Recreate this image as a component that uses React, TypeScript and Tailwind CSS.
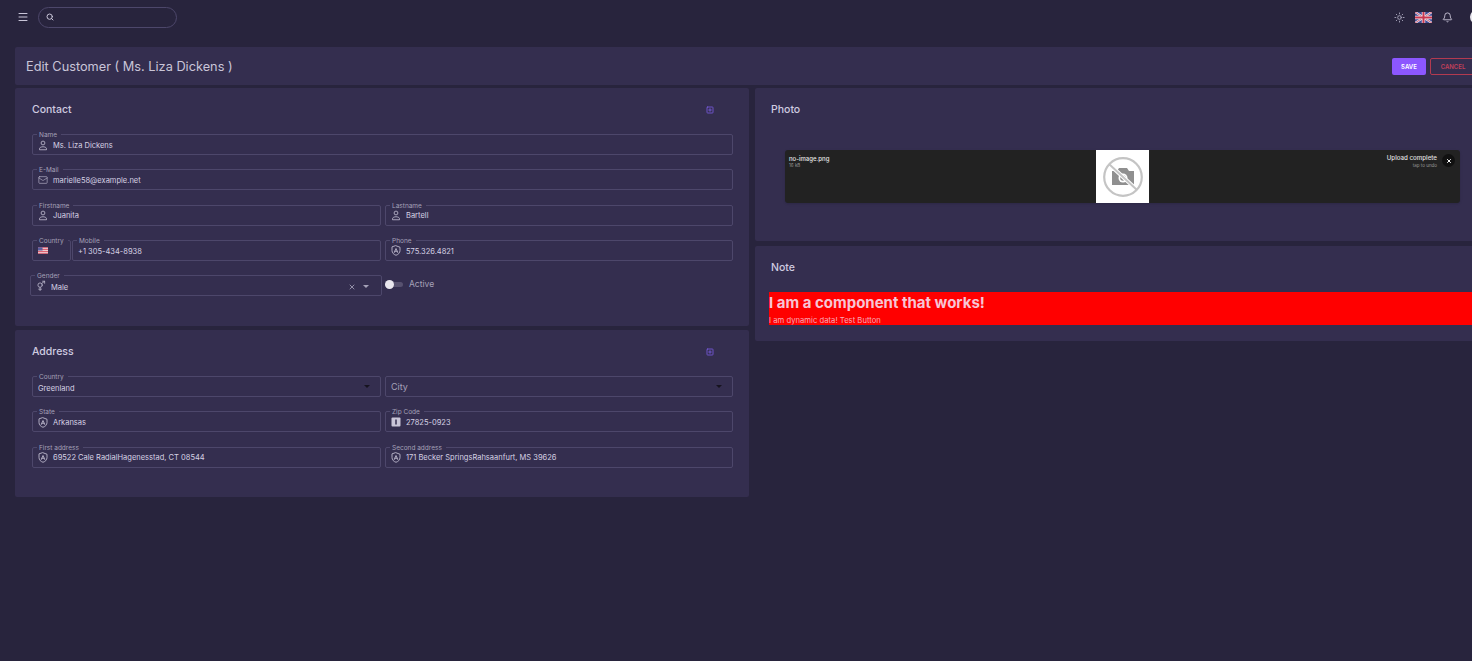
import React from 'react';
import { Menu, Search, Sun, Bell, Mail, X, SquarePlus } from 'lucide-react';

const font = { fontFamily: 'Inter, "Noto Sans", sans-serif' };

const Person = () => (
  <svg width="10" height="11" viewBox="0 0 20 22" fill="none" stroke="currentColor" strokeWidth="1.700" strokeLinejoin="round">
    <circle cx="10" cy="6" r="3.800" />
    <path d="M3 19.500v-2c0-2.800 4.300-4 7-4s7 1.200 7 4v2Z" />
  </svg>
);

const ShieldA = () => (
  <svg width="10" height="11" viewBox="0 0 20 22" fill="none" stroke="currentColor" strokeWidth="1.800" strokeLinejoin="round" strokeLinecap="round">
    <path d="M10 1.5 18 4.5V11c0 5-3.6 8.2-8 9.5C5.600 19.200 2 16 2 11V4.500Z" />
    <path d="M6.500 15 10 7l3.500 8M7.800 12.500h4.400" />
  </svg>
);

const Badge = () => (
  <svg width="10" height="10" viewBox="0 0 20 20">
    <rect x="1" y="1" width="18" height="18" rx="2" fill="#c9c5d8" />
    <rect x="8.500" y="5" width="3" height="10" fill="#342e4f" />
  </svg>
);

const Gender = () => (
  <svg width="11" height="12" viewBox="0 0 22 24" fill="none" stroke="currentColor" strokeWidth="1.800" strokeLinecap="round">
    <circle cx="9" cy="10" r="4.800" />
    <path d="M12.500 6.500 19 1.500M14.500 1.500H19V6M9 15v7M6 19h6" />
  </svg>
);

const UsFlag = () => (
  <svg width="11" height="7" viewBox="0 0 22 14">
    <rect width="22" height="14" fill="#f1e4e8" />
    <path d="M0 1h22M0 5h22M0 9h22M0 13h22" stroke="#d8475a" strokeWidth="2" />
    <rect width="10" height="7" fill="#5b5f9e" />
  </svg>
);

const UkFlag = () => (
  <svg width="17" height="11" viewBox="0 0 34 22">
    <rect width="34" height="22" fill="#3f4a94" />
    <path d="M0 0 34 22M34 0 0 22" stroke="#e8e6ee" strokeWidth="4.500" />
    <path d="M0 0 34 22M34 0 0 22" stroke="#c9364f" strokeWidth="1.500" />
    <path d="M17 0v22M0 11h34" stroke="#e8e6ee" strokeWidth="7" />
    <path d="M17 0v22M0 11h34" stroke="#c9364f" strokeWidth="4" />
  </svg>
);

const NoImage = () => (
  <svg width="42" height="42" viewBox="0 0 42 42" fill="none">
    <path d="M10 15h5l2-3h8l2 3h5v14H10Z" fill="#8f8f8f" />
    <circle cx="21" cy="22" r="4.500" fill="#fff" />
    <circle cx="21" cy="22" r="2.800" fill="#8f8f8f" />
    <path d="M8 9 34 33" stroke="#fff" strokeWidth="4" />
    <path d="M7 8 35 34" stroke="#c4c4c4" strokeWidth="2" />
    <circle cx="21" cy="21" r="18.800" stroke="#c4c4c4" strokeWidth="2.200" />
  </svg>
);

type FieldProps = {
  label?: string;
  value?: string;
  icon?: React.ReactNode;
  className?: string;
  right?: React.ReactNode;
  placeholder?: boolean;
};

const Field = ({ label, value, icon, className = '', right, placeholder }: FieldProps) => (
  <div className={`relative h-[21px] rounded-[2px] border border-[#4d476b] flex items-center px-[5px] ${className}`}>
    {label && (
      <span className="absolute left-[4px] -top-[4px] bg-[#342e4f] px-[2px] pr-[4px] text-[6.500px] leading-[8px] text-[#a5a1b8]">
        {label}
      </span>
    )}
    {icon && <span className="w-[10px] h-[12px] flex items-center justify-center shrink-0 mr-[5px] mt-[1px] text-[#bdb9cd]">{icon}</span>}
    <span
      className={
        placeholder
          ? 'text-[9px] text-[#a5a1b8]'
          : right
            ? 'text-[7.500px] mt-[4px] text-[#d6d2e4] whitespace-nowrap'
            : 'text-[7.500px] mt-[2px] text-[#d6d2e4] whitespace-nowrap'
      }
    >
      {value}
    </span>
    {right && <span className="ml-auto flex items-center">{right}</span>}
  </div>
);

const Caret = ({ className = 'mr-[5px] border-t-[#16131f]' }: { className?: string }) => (
  <span className={`w-0 h-0 border-x-[3px] border-x-transparent border-t-[3px] ${className}`} />
);

const CardTitle = ({ title, plus }: { title: string; plus?: boolean }) => (
  <div className="flex items-center justify-between pr-[19px] h-[14px]">
    <h2 className="text-[10.500px] font-medium text-[#cfcbe0]">{title}</h2>
    {plus && <SquarePlus size={8} strokeWidth={2.500} className="text-[#7a5ce0]" />}
  </div>
);

export default function App() {
  const person = <Person />;

  return (
    <div style={font} className="w-[1472px] h-[661px] overflow-hidden bg-[#28243d]">
      {/* top bar */}
      <header className="h-[34px] flex items-center pl-[17px] w-[1490px]">
        <Menu size={12} className="text-[#c9c5d8]" />
        <div className="ml-[9px] w-[139px] h-[21px] rounded-full border border-[#4d476b] flex items-center pl-[7px]">
          <Search size={8} strokeWidth={3} className="text-[#c9c5d8]" />
        </div>
        <div className="ml-auto flex items-center pr-[6px]">
          <Sun size={11} className="text-[#a9a5bb]" />
          <span className="ml-[10px] flex"><UkFlag /></span>
          <Bell size={11} className="ml-[10px] text-[#c9c5d8]" />
          <span className="ml-[17px] w-[14px] h-[14px] rounded-full bg-[#e9e7ee]" />
        </div>
      </header>

      <main className="pl-[15px] pt-[13px] w-[1490px]">
        {/* page header */}
        <section className="h-[38px] bg-[#342e4f] rounded-[2px] flex items-center pl-[11px] pr-[14px]">
          <h1 className="text-[12.750px] mt-[1px] text-[#c9c5d8]">Edit Customer ( Ms. Liza Dickens )</h1>
          <div className="ml-auto flex items-center gap-[4px]">
            <button className="w-[34px] h-[17px] rounded-[2px] bg-[#8c57ff] text-white text-[6px] font-semibold">SAVE</button>
            <button className="w-[46px] h-[17px] rounded-[2px] border border-[#b33a50] text-[#c2405a] text-[6px] font-semibold">CANCEL</button>
          </div>
        </section>

        <div className="mt-[3px] grid grid-cols-[734px_1fr] gap-x-[6px] items-start">
          {/* left column */}
          <div className="flex flex-col gap-[4px]">
            <section className="h-[238px] bg-[#342e4f] rounded-[2px] pl-[17px] pr-[16px] pt-[15px]">
              <CardTitle title="Contact" plus />
              <div className="mt-[17px] grid grid-cols-[349px_1fr] gap-x-[4px] gap-y-[14.250px]">
                <Field className="col-span-2" label="Name" value="Ms. Liza Dickens" icon={person} />
                <Field className="col-span-2" label="E-Mail" value="marielle58@example.net" icon={<Mail size={10} strokeWidth={1.500} />} />
                <Field label="Firstname" value="Juanita" icon={person} />
                <Field label="Lastname" value="Bartell" icon={person} />
                <div className="flex gap-px">
                  <Field className="w-[39px] shrink-0" label="Country" icon={<UsFlag />} />
                  <Field className="flex-1" label="Mobile" value="+1 305-434-8938" />
                </div>
                <Field label="Phone" value="575.326.4821" icon={<ShieldA />} />
                <div className="-ml-[2px] -mr-px">
                  <Field
                    label="Gender"
                    value="Male"
                    icon={<Gender />}
                    right={
                      <>
                        <X size={8} strokeWidth={2.500} className="mt-[2px] text-[#a5a1b8]" />
                        <Caret className="ml-[7px] mr-[7px] mt-[2px] border-t-[#a5a1b8]" />
                      </>
                    }
                  />
                </div>
                <div className="flex items-center -mt-[3px]">
                  <span className="relative w-[18px] h-[5px] rounded-full bg-[#57516f]">
                    <span className="absolute left-0 -top-[2px] w-[9px] h-[9px] rounded-full bg-[#e9e7ee]" />
                  </span>
                  <span className="ml-[6px] text-[8.500px] text-[#a5a1b8]">Active</span>
                </div>
              </div>
            </section>

            <section className="h-[167px] bg-[#342e4f] rounded-[2px] pl-[17px] pr-[16px] pt-[15px]">
              <CardTitle title="Address" plus />
              <div className="mt-[17px] grid grid-cols-[349px_1fr] gap-x-[4px] gap-y-[14.250px]">
                <Field label="Country" value="Greenland" right={<Caret />} />
                <Field value="City" placeholder right={<Caret />} />
                <Field label="State" value="Arkansas" icon={<ShieldA />} />
                <Field label="Zip Code" value="27825-0923" icon={<Badge />} />
                <Field label="First address" value="69522 Cale RadialHagenesstad, CT 08544" icon={<ShieldA />} />
                <Field label="Second address" value="171 Becker SpringsRahsaanfurt, MS 39626" icon={<ShieldA />} />
              </div>
            </section>
          </div>

          {/* right column */}
          <div className="flex flex-col gap-[5px]">
            <section className="h-[153px] bg-[#342e4f] rounded-[2px] pl-[16px] pt-[15px]">
              <CardTitle title="Photo" />
              <div className="mt-[33px] ml-[14px] mr-[30px] h-[53px] bg-[#222222] rounded-[3px] shadow-sm flex">
                <div className="w-[311px] pl-[4px] pt-[5px]">
                  <p className="text-[6px] leading-[7px] font-medium text-[#e8e8e8]">no-image.png</p>
                  <p className="text-[4.500px] leading-[8px] text-[#9a9a9a]">16 kB</p>
                </div>
                <div className="w-[53px] bg-white flex items-center justify-center">
                  <NoImage />
                </div>
                <div className="flex-1 flex justify-end pr-[5px] pt-[4px]">
                  <div className="text-right">
                    <p className="text-[6.200px] leading-[8px] font-medium text-[#e0e0e0]">Upload complete</p>
                    <p className="text-[4.500px] leading-[8px] text-[#9a9a9a]">tap to undo</p>
                  </div>
                  <span className="ml-[5px] w-[13px] h-[13px] rounded-full bg-[#111111] flex items-center justify-center">
                    <X size={6} strokeWidth={4} className="text-white" />
                  </span>
                </div>
              </div>
            </section>

            <section className="h-[95px] bg-[#342e4f] rounded-[2px] pt-[15px]">
              <div className="pl-[16px]">
                <CardTitle title="Note" />
              </div>
              <div className="mt-[17px] ml-[14px] h-[33px] bg-[#ff0000] text-[#f7c5d5]">
                <p className="text-[15px] leading-[21px] font-bold whitespace-nowrap">I am a component that works!</p>
                <p className="text-[7.700px] leading-[10px] mt-[3px] text-[#f9a9b9]">I am dynamic data! Test Button</p>
              </div>
            </section>
          </div>
        </div>
      </main>
    </div>
  );
}
